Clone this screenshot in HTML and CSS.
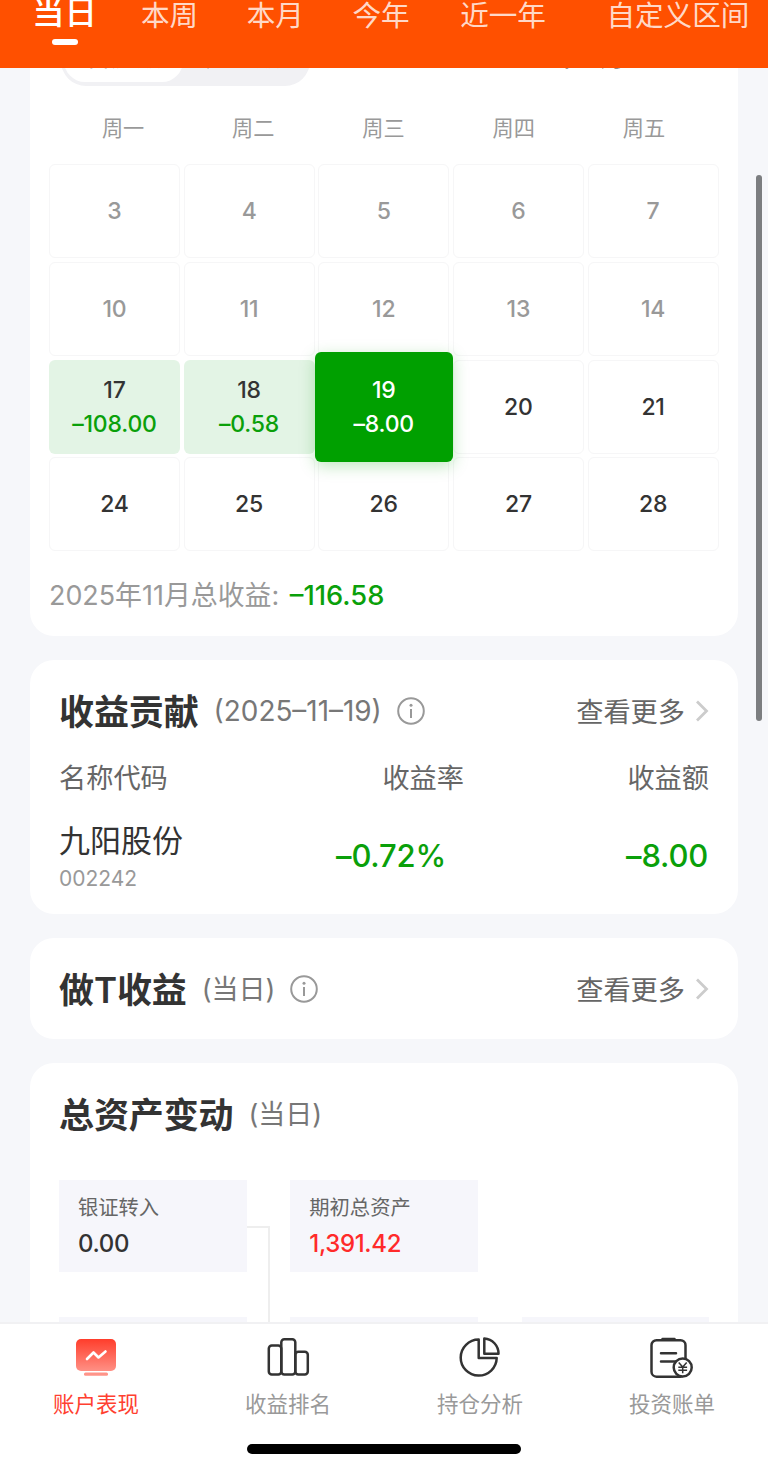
FILE: index.html
```html
<!DOCTYPE html>
<html lang="zh-CN">

<head>
    <meta charset="UTF-8">
    <title>账户表现</title>
    <link rel="stylesheet" href="styles.css">
</head>

<body>
    <div class="topbar">
        <div class="tab active">当日</div>
        <div class="tab">本周</div>
        <div class="tab">本月</div>
        <div class="tab">今年</div>
        <div class="tab">近一年</div>
        <div class="tab custom">自定义区间</div>
    </div>

    <div class="content">
        <!-- calendar -->
        <div class="card calendar">
            <div class="calendar-head">
                <div class="switch">
                    <span class="on">日历版</span>
                    <span>分时版</span>
                </div>
                <div class="month">2025年11月</div>
            </div>
            <div class="week">
                <span>周一</span><span>周二</span><span>周三</span><span>周四</span><span>周五</span>
            </div>
            <div class="days">
                <div class="day past">3</div>
                <div class="day past">4</div>
                <div class="day past">5</div>
                <div class="day past">6</div>
                <div class="day past">7</div>
                <div class="day past">10</div>
                <div class="day past">11</div>
                <div class="day past">12</div>
                <div class="day past">13</div>
                <div class="day past">14</div>
                <div class="day loss">17<span>–108.00</span></div>
                <div class="day loss">18<span>–0.58</span></div>
                <div class="day selected">19<span>–8.00</span></div>
                <div class="day">20</div>
                <div class="day">21</div>
                <div class="day">24</div>
                <div class="day">25</div>
                <div class="day">26</div>
                <div class="day">27</div>
                <div class="day">28</div>
            </div>
            <div class="total">2025年11月总收益: <b>–116.58</b></div>
        </div>

        <!-- contribution -->
        <div class="card contribution">
            <div class="card-head">
                <h2>收益贡献</h2>
                <span class="sub date">(2025–11–19)</span>
                <svg class="info" viewBox="0 0 28 28">
                    <circle cx="14" cy="14" r="12.8" />
                    <path d="M14 12v9" />
                    <circle class="dot" cx="14" cy="8.3" r="1.5" />
                </svg>
                <a class="more">查看更多
                    <svg viewBox="0 0 14 22"><path d="M2 1.500l9.500 9.500L2 20.500" /></svg>
                </a>
            </div>
            <div class="row labels">
                <span>名称代码</span>
                <span class="rate">收益率</span>
                <span class="amount">收益额</span>
            </div>
            <div class="row stock">
                <div>
                    <div class="name">九阳股份</div>
                    <div class="code">002242</div>
                </div>
                <span class="rate">–0.72%</span>
                <span class="amount">–8.00</span>
            </div>
        </div>

        <div class="card">
            <div class="card-head">
                <h2>做T收益</h2>
                <span class="sub">(当日)</span>
                <svg class="info" viewBox="0 0 28 28">
                    <circle cx="14" cy="14" r="12.8" />
                    <path d="M14 12v9" />
                    <circle class="dot" cx="14" cy="8.3" r="1.5" />
                </svg>
                <a class="more">查看更多
                    <svg viewBox="0 0 14 22"><path d="M2 1.500l9.500 9.500L2 20.500" /></svg>
                </a>
            </div>
        </div>

        <!-- assets -->
        <div class="card assets">
            <div class="card-head">
                <h2>总资产变动</h2>
                <span class="sub">(当日)</span>
            </div>
            <div class="flow">
                <div class="box linked">
                    <div class="label">银证转入</div>
                    <div class="value">0.00</div>
                </div>
                <div class="box">
                    <div class="label">期初总资产</div>
                    <div class="value red">1,391.42</div>
                </div>
                <div></div>
                <div class="box"></div>
                <div class="box"></div>
                <div class="box"></div>
            </div>
        </div>
    </div>

    <div class="scrollbar"></div>

    <div class="bottom">
        <div class="nav">
            <div class="nav-item current">
                <svg viewBox="0 0 48 44">
                    <defs>
                        <linearGradient id="screen" x1="0" y1="0" x2="0" y2="1">
                            <stop offset="0" stop-color="#ff3d2b" />
                            <stop offset="1" stop-color="#ff9085" />
                        </linearGradient>
                    </defs>
                    <rect x="4" y="3" width="40" height="32" rx="5" fill="url(#screen)" />
                    <rect x="12" y="36.500" width="24" height="3.200" rx="1.500" fill="#ff9489" />
                    <path d="M15 23l6.500-6.500 5 5 7-6" fill="none" stroke="#fff" stroke-width="2.600" stroke-linecap="round" stroke-linejoin="round" />
                </svg>
                账户表现
            </div>
            <div class="nav-item">
                <svg class="line" viewBox="0 0 48 44">
                    <rect x="4.800" y="9.500" width="12.500" height="29" rx="3" />
                    <rect x="17.300" y="3.200" width="14" height="35.300" rx="3" />
                    <rect x="31.300" y="15.800" width="12.500" height="22.700" rx="3" />
                </svg>
                收益排名
            </div>
            <div class="nav-item">
                <svg class="line" viewBox="0 0 48 44">
                    <path d="M22.700 3.600A18 18 0 1 0 40.700 22H22.700z" />
                    <path d="M28.300 2.500V17.700H42.500A15 15 0 0 0 28.300 2.500z" />
                </svg>
                持仓分析
            </div>
            <div class="nav-item">
                <svg class="line" viewBox="0 0 48 44">
                    <rect x="3.500" y="4.200" width="34" height="36.500" rx="5" />
                    <path d="M14.500 3h12M13 17.300h15M13 25.500h15" stroke-linecap="round" />
                    <circle cx="34.700" cy="31.500" r="9" fill="#fff" />
                    <path d="M30.700 26.500l4 4.500 4-4.500M34.700 31v6.300M30.300 31.300h8.800M30.300 34.300h8.800" stroke-width="1.500" />
                </svg>
                投资账单
            </div>
        </div>
        <div class="home"></div>
    </div>
</body>

</html>
```
FILE: styles.css
```css
* {
    box-sizing: border-box;
}

body {
    margin: 0;
    height: 1469px;
    display: flex;
    flex-direction: column;
    overflow: hidden;
    position: relative;
    background-color: #f6f7fa;
    color: #333;
    font-family: Inter, "Noto Sans CJK SC", sans-serif;
}

.topbar {
    display: flex;
    flex: none;
    height: 68px;
    padding-left: 32px;
    background-color: #ff5000;
    color: rgba(255, 255, 255, 0.8);
    font-size: 28.600px;
    line-height: 32px;
    white-space: nowrap;
}

.tab {
    margin-right: 48.500px;
}

.tab.active {
    margin-right: 44px;
    color: white;
    font-size: 32.500px;
    font-weight: 500;
    line-height: 26px;
}

.tab.active::after {
    content: "";
    display: block;
    width: 26px;
    height: 6px;
    margin: 13px auto 0;
    border-radius: 3px;
    background-color: white;
}

.tab:nth-child(5) {
    margin-left: 2px;
}

.tab.custom {
    margin-left: 12px;
    margin-right: 0;
}

.content {
    flex: 1;
    min-height: 0;
    overflow: hidden;
    padding: 0 30px;
}

.card {
    background-color: white;
    border-radius: 24px;
    margin-bottom: 24px;
    padding: 26px 29px 25px;
    width: 708px;
}

/* calendar */
.calendar {
    height: 600px;
    margin-top: -32px;
    padding: 0 19px;
}

.calendar-head {
    display: flex;
    justify-content: space-between;
    padding: 0 93px 0 12px;
    font-size: 26px;
    line-height: 44px;
}

.switch {
    display: flex;
    width: 249px;
    height: 50px;
    padding: 4px 3px;
    border-radius: 25px;
    background-color: #f1f1f4;
    font-size: 25px;
    line-height: 34px;
}

.switch span {
    width: 119px;
    height: 42px;
    text-align: center;
}

.switch .on {
    border-radius: 21px;
    background-color: white;
}

.month {
    font-weight: 500;
    line-height: 42px;
}

.week {
    display: flex;
    padding: 0 10px 0 9px;
    margin-top: 28px;
    color: #999;
    font-size: 21.200px;
    line-height: 29px;
}

.week span {
    flex: 1;
    text-align: center;
}

.days {
    display: grid;
    grid-template-columns: repeat(5, 1fr);
    grid-auto-rows: 94px;
    gap: 3.800px;
    margin-top: 21px;
    width: 669.500px;
}

.day {
    display: flex;
    flex-direction: column;
    align-items: center;
    justify-content: center;
    border: 1px solid #f6f6f7;
    border-radius: 6px;
    font-size: 23px;
    font-weight: 500;
    line-height: 34px;
    letter-spacing: -0.200px;
}

.day.past {
    color: #999;
}

.day.loss {
    border: none;
    background-color: #e3f4e5;
}

.day.loss span {
    color: #0aa00a;
}

.day.selected {
    position: relative;
    margin: -8px -3.500px;
    border: none;
    background-color: #00a000;
    color: white;
    box-shadow: 0 4px 16px rgba(0, 160, 0, 0.25);
}

.total {
    margin-top: 24px;
    color: #999;
    font-size: 26.900px;
    line-height: 40px;
}

.total b {
    margin-left: 3px;
    color: #0aa00a;
    font-size: 27.300px;
    font-weight: 500;
}

/* cards */
.card-head {
    display: flex;
    align-items: center;
    height: 50px;
    padding-bottom: 3px;
}

h2 {
    margin: 0;
    font-size: 35px;
    font-weight: 600;
    letter-spacing: -0.100px;
}

.sub {
    margin-left: 15px;
    color: #777;
    font-size: 27px;
}

.sub.date {
    font-size: 27.900px;
    padding-top: 2px;
}

.info {
    width: 28px;
    height: 28px;
    margin-left: 15px;
    margin-top: 3px;
    fill: none;
    stroke: #999;
    stroke-width: 2;
}

.info .dot {
    fill: #999;
    stroke: none;
}

.more {
    display: flex;
    align-items: center;
    margin-left: auto;
    color: #666;
    font-size: 27.200px;
}

.more svg {
    width: 14px;
    height: 22px;
    margin-left: 10px;
    margin-top: 3px;
    fill: none;
    stroke: #ccc;
    stroke-width: 2.800;
}

.contribution {
    height: 254px;
}

.row {
    display: flex;
    align-items: center;
}

.rate {
    margin-left: auto;
}

.amount {
    width: 245px;
    text-align: right;
}

.labels {
    height: 40px;
    margin-top: 20px;
    color: #666;
    font-size: 27.200px;
}

.stock {
    margin-top: 18px;
    height: 82px;
    color: #0aa00a;
    font-size: 31px;
    font-weight: 550;
    letter-spacing: -0.200px;
}

.stock .rate {
    margin-right: 18px;
}

.stock .amount {
    padding-right: 1px;
}

.name {
    color: #333;
    font-size: 31px;
    font-weight: normal;
    line-height: 47px;
    letter-spacing: 0;
}

.code {
    color: #999;
    font-size: 21px;
    font-weight: normal;
    line-height: 30px;
    letter-spacing: 0;
}

/* assets */
.flow {
    display: grid;
    grid-template-columns: repeat(3, 187.500px);
    grid-auto-rows: 92px;
    column-gap: 43.800px;
    row-gap: 44.500px;
    margin-top: 41px;
}

.box {
    position: relative;
    padding: 10px 19px;
    background-color: #f6f6fb;
}

.box.linked::after {
    content: "";
    position: absolute;
    left: 188px;
    top: 46px;
    width: 21px;
    height: 140px;
    border: 2px solid #eee;
    border-left: none;
    border-bottom: none;
}

.label {
    color: #666;
    font-size: 20.300px;
    line-height: 35px;
}

.value {
    font-size: 24px;
    font-weight: 500;
    line-height: 38px;
    letter-spacing: -0.350px;
}

.red {
    color: #ff2a2a;
}

.scrollbar {
    position: absolute;
    top: 175px;
    left: 755.500px;
    width: 6px;
    height: 546px;
    border-radius: 3px;
    background-color: #7c7e80;
}

/* bottom nav */
.bottom {
    flex: none;
    height: 147px;
    border-top: 2px solid #f1f1f3;
    background-color: white;
}

.nav {
    display: flex;
    padding-top: 12px;
}

.nav-item {
    display: flex;
    flex: 1;
    flex-direction: column;
    align-items: center;
    color: #999;
    font-size: 21.500px;
    line-height: 30px;
}

.nav-item svg {
    width: 48px;
    height: 44px;
    margin-bottom: 9px;
}

.nav-item .line {
    fill: none;
    stroke: #333;
    stroke-width: 2.500;
    stroke-linejoin: round;
}

.nav-item.current {
    color: #ff4030;
}

.home {
    width: 274px;
    height: 10px;
    margin: 25px auto 0;
    border-radius: 5px;
    background-color: black;
}
```
